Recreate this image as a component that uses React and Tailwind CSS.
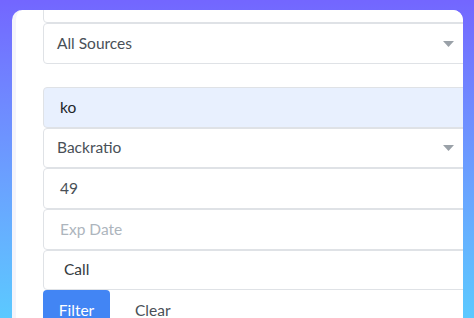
import React from "react";

function Caret() {
  return (
    <svg width="11" height="6" viewBox="0 0 11 6" className="absolute right-[8px] top-1/2 -translate-y-1/2">
      <path d="M0 0 H11 L5.5 6 Z" fill="#9aa1a8" />
    </svg>
  );
}

function Field({ children, h = "h-[41px]", pl = "pl-[13px]", bg = "bg-white", color = "text-[#495057]", caret = false }) {
  return (
    <div className={`relative flex w-[460px] items-center rounded-[4px] border border-[#dfe2e6] ${h} ${pl} ${bg} ${color}`}>
      <span>{children}</span>
      {caret ? <div className="absolute left-[388px] top-0 h-full w-[30px]"><Caret /></div> : null}
    </div>
  );
}

export default function App() {
  return (
    <div
      className="h-[318px] w-[474px] overflow-hidden bg-gradient-to-b from-[#7366ff] to-[#5bc9ff] pl-[12px] pr-[11px] pt-[10px] text-[15.5px]"
      style={{ fontFamily: "Lato, 'Open Sans', sans-serif" }}
    >
      <div className="h-[320px] overflow-hidden rounded-t-[10px] border-l-4 border-[#f4f4fb] bg-white pl-[27px]">
        <div className="-mt-[28px] flex flex-col">
          <Field> </Field>
          <Field caret>All Sources</Field>
          <div className="h-[23px]" />
          <Field pl="pl-[16px]" bg="bg-[#e8f0fe]" color="text-[#212529]">ko</Field>
          <Field h="h-[40px]" caret>Backratio</Field>
          <Field pl="pl-[16px]">49</Field>
          <Field pl="pl-[16px]" color="text-[#adb5bd]">Exp Date</Field>
          <Field h="h-[40px]" pl="pl-[20px]" color="text-[#343a40]">Call</Field>
          <div className="flex items-start">
            <button className="flex h-[40px] w-[67px] items-center justify-center rounded-t-[4px] bg-[#4285f4] pt-[2px] text-white">
              Filter
            </button>
            <button className="ml-[25px] flex h-[40px] items-center pt-[2px] text-[#495057]">Clear</button>
          </div>
        </div>
      </div>
    </div>
  );
}
